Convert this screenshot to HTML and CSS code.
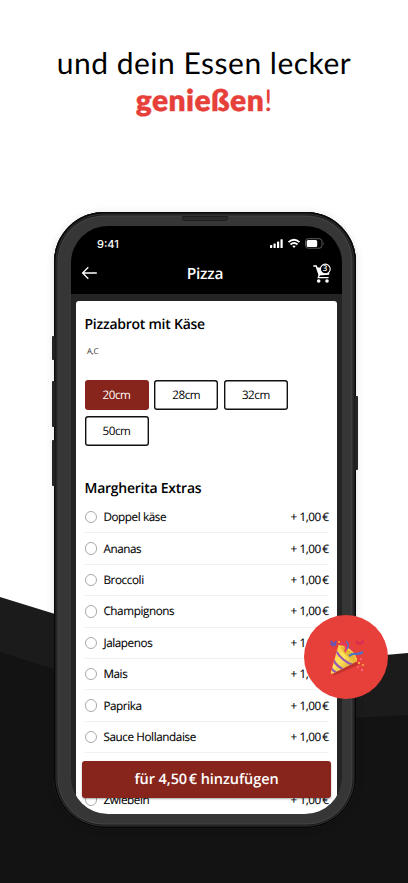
FILE: index.html
```html
<!DOCTYPE html>
<html lang="de">
<head>
<meta charset="utf-8">
<title>Pizza</title>
<link rel="stylesheet" href="styles.css">
</head>
<body>
<svg class="backdrop" viewBox="0 0 408 883" aria-hidden="true">
  <path fill="#1b1b1b" d="M0 597 L55 614 Q200 662 300 660 Q355 658 408 653 V883 H0Z"/>
  <path fill="#131313" d="M0 652 L55 669.500 Q200 721 300 720 Q355 718 408 715 V883 H0Z"/>
</svg>
<h1 class="headline"><span class="line">und dein Essen lecker</span><br><span class="accent"><b>genießen</b>!</span></h1>

<main class="phone">
  <i class="key mute"></i><i class="key up"></i><i class="key down"></i><i class="key power"></i><i class="speaker"></i>
  <div class="screen">
    <header class="top">
      <div class="status">
        <span class="time">9:41</span>
        <svg class="signals" viewBox="0 0 56 12">
          <g fill="#fff"><rect x="0" y="7" width="2.200" height="3" rx=".6"/><rect x="3.500" y="5.500" width="2.200" height="4.500" rx=".6"/><rect x="7" y="3.500" width="2.200" height="6.500" rx=".6"/><rect x="10.500" y="1.200" width="2.200" height="8.800" rx=".6"/></g>
          <g fill="none" stroke="#fff" stroke-width="1.700"><path d="M18.500 4.200Q24 -.7 29.500 4.200"/><path d="M20.500 6.500Q24 3.500 27.500 6.500"/></g>
          <path fill="#fff" d="M22.300 8.100Q24 6.800 25.700 8.100L24 10Z"/>
          <rect x="35.500" y=".7" width="16.500" height="9.500" rx="2.700" fill="none" stroke="#666" stroke-width=".9"/>
          <rect x="36.700" y="1.900" width="10.500" height="7.100" rx="1.500" fill="#fff"/><path d="M53 4q1.400 1.500 0 3z" fill="#666"/>
        </svg>
      </div>
      <div class="nav">
        <svg class="back" viewBox="0 0 16 14"><path d="M15.300 7H1.200M6.800 1.300 1.100 7l5.700 5.700" fill="none" stroke="#fff" stroke-width="1.300"/></svg>
        <span class="nav-title">Pizza</span>
        <span class="cart">
          <svg viewBox="0 0 20 21"><path d="M1.300 3H4.200L7.400 12.500" fill="none" stroke="#fff" stroke-width="1.500"/><path d="M4.600 4.500H12L17.500 10.500 16.800 11.800 7 12.600Z" fill="#fff"/><path d="M7.200 12 6.300 14.600H16.600" fill="none" stroke="#fff" stroke-width="1.300"/><circle cx="6.700" cy="18" r="1.800" fill="#fff"/><circle cx="15" cy="18" r="1.800" fill="#fff"/><circle cx="13.300" cy="6" r="4.900" fill="#000" stroke="#fff" stroke-width="1.100"/></svg>
          <b class="count">3</b>
        </span>
      </div>
    </header>
    <section class="card">
      <h2 class="product">Pizzabrot mit Käse</h2>
      <p class="allergens">A,C</p>
      <div class="sizes"><span class="size selected">20cm</span><span class="size">28cm</span><span class="size">32cm</span><span class="size">50cm</span></div>
      <h2 class="extras">Margherita Extras</h2>
      <ul class="options">
        <li><i></i><span>Doppel käse</span><em>+ 1,00<b> €</b></em></li>
        <li><i></i><span>Ananas</span><em>+ 1,00<b> €</b></em></li>
        <li><i></i><span>Broccoli</span><em>+ 1,00<b> €</b></em></li>
        <li><i></i><span>Champignons</span><em>+ 1,00<b> €</b></em></li>
        <li><i></i><span>Jalapenos</span><em>+ 1,00<b> €</b></em></li>
        <li><i></i><span>Mais</span><em>+ 1,00<b> €</b></em></li>
        <li><i></i><span>Paprika</span><em>+ 1,00<b> €</b></em></li>
        <li><i></i><span>Sauce Hollandaise</span><em>+ 1,00<b> €</b></em></li>
        <li></li>
        <li><i></i><span>Zwiebeln</span><em>+ 1,00<b> €</b></em></li>
      </ul>
    </section>
    <div class="add"><span>für 4,50<span class="euro"> €</span> hinzufügen</span></div>
  </div>
</main>

<div class="party">
  <svg viewBox="0 0 40 42">
    <defs>
      <linearGradient id="cone" x1="0" y1="0" x2="1" y2="1"><stop offset="0" stop-color="#f2b12d"/><stop offset=".4" stop-color="#ffe45c"/><stop offset=".8" stop-color="#c98a1c"/></linearGradient>
      <clipPath id="cone-clip"><path d="M10.500 6Q18 6 25 13Q29.500 18 29 22.500L5 34.500Q2.200 35.500 3 33Z"/></clipPath>
    </defs>
    <path d="M5 37 30 26 28 22 8 30Z" fill="#8f1f1b" opacity=".4"/>
    <g clip-path="url(#cone-clip)"><path d="M0 0H40V42H0Z" fill="url(#cone)"/><path d="M8 12Q14 22 25 26M5 20Q9 29 18 31M2 28Q5 32 9 34" fill="none" stroke="#9558b5" stroke-width="2.200"/></g>
    <ellipse cx="20.500" cy="14.500" rx="3" ry="10" transform="rotate(-47 20.500 14.500)" fill="#e8b637"/>
    <path d="M17 13Q19 9 17 5Q14 2 12 6" fill="none" stroke="#e43b62" stroke-width="2"/>
    <path d="M24 11 23.500 7.500" fill="none" stroke="#e43b62" stroke-width="2"/>
    <path d="M18 2Q22 5 19 10" fill="none" stroke="#5a6fc6" stroke-width="1.500"/>
    <path d="M21 17Q25 14 28 15Q32 15 35 13" fill="none" stroke="#4d70c4" stroke-width="2.200"/>
    <path d="M28 2Q30 6 33 4Q36 4 34 1" fill="none" stroke="#d92c55" stroke-width="2.200"/>
    <path d="M2.500 2 7 6 8 2M2.500 5 6 7" fill="none" stroke="#6655b4" stroke-width="1.800"/>
    <g fill="#ffc248"><circle cx="31" cy="24" r="1.100"/><circle cx="35" cy="26" r=".9"/><circle cx="11" cy="3" r=".9"/><circle cx="28" cy="20" r="1.100"/></g>
    <g fill="#ff6689"><circle cx="33" cy="20" r="1.100"/><circle cx="34" cy="31" r="1.200"/><circle cx="30" cy="28" r=".9"/></g>
  </svg>
</div>
</body>
</html>
```
FILE: styles.css
```css
* { box-sizing: border-box; }
body { margin: 0; width: 408px; height: 883px; position: relative; overflow: hidden; background: #fff; color: #000; font-family: "Open Sans", "Noto Sans", sans-serif; text-rendering: geometricPrecision; }
.backdrop { position: absolute; inset: 0; width: 408px; height: 883px; }
.headline { position: relative; margin: 0; padding-top: 45px; height: 212px; text-align: center; font: 400 30px/37px Lato, sans-serif; white-space: nowrap; }
.line { letter-spacing: .5px; }
.accent { color: #e73f39; }
.accent b { font-weight: 800; -webkit-text-stroke: .3px #e73f39; letter-spacing: .4px; }
.phone { position: relative; width: 302px; height: 616px; margin-left: 54px; padding: 14px 14px 14px 17px; border-radius: 50px; background: #363636; box-shadow: inset 0 0 0 1.500px #080808, inset 0 0 0 2.500px #303030, inset 0 0 0 3.500px #1b1b1b, inset 0 0 0 4.500px #444, 0 1px 8px rgba(0,0,0,.13); }
.key { position: absolute; width: 3px; background: #242424; border-radius: 1px; left: -2px; }
.mute { top: 124px; height: 24px; }
.up { top: 169px; height: 46px; }
.down { top: 228px; height: 46px; }
.power { top: 184px; height: 74px; left: 301px; }
.speaker { position: absolute; left: 128px; top: 4px; width: 46px; height: 5px; border-radius: 0 0 3px 3px; background: #292929; border: 1px solid #1c1c1c; }
.screen { position: relative; width: 271px; height: 588px; overflow: hidden; border-radius: 37px; background: #242424; }
.top { height: 68px; background: #000; color: #fff; }
.status { display: flex; justify-content: space-between; align-items: center; height: 35px; padding: 1px 16px 0 26px; }
.time { font: 500 11px/16px Inter, sans-serif; }
.signals { width: 56px; height: 12px; }
.nav { display: grid; grid-template-columns: 30px 1fr 30px; align-items: center; height: 24px; padding: 0 10px 0 10px; }
.back { width: 17px; height: 14px; }
.nav-title { margin: -1px 3px 0 0; text-align: center; font-size: 15.500px; line-height: 22px; letter-spacing: -.2px; font-weight: 650; }
.cart { position: relative; width: 20px; height: 21px; justify-self: end; }
.cart svg { display: block; width: 20px; height: 21px; }
.count { position: absolute; left: 10px; top: .5px; width: 6px; text-align: center; font-size: 8px; line-height: 11px; font-weight: 600; }
.card { margin: 7px 5px 0; height: 520px; padding: 13px 9px 0 8.500px; border-radius: 3px; background: #fff; }
.card h2 { margin: 0; font-size: 14px; line-height: 22px; font-weight: 600; letter-spacing: -.25px; white-space: nowrap; }
.allergens { margin: 8px 0 0 2.500px; font-size: 8px; line-height: 15px; letter-spacing: -.3px; color: #333; }
.sizes { display: flex; flex-wrap: wrap; gap: 5.700px; margin-top: 20.500px; height: 67px; }
.size { display: flex; align-items: center; justify-content: center; width: 64px; height: 30.500px; box-shadow: inset 0 0 0 1.400px #111; border-radius: 3px; font-size: 11.700px; letter-spacing: -.45px; }
.size.selected { background: #87251d; box-shadow: none; color: #fff; }
.card .extras { margin-top: 31.500px; }
.options { margin: 2px 0 0; padding: 0; list-style: none; }
.options li { display: flex; align-items: center; height: 31.400px; width: 244px; border-bottom: 1px solid #f1f1f1; font-size: 11.700px; letter-spacing: -.4px; -webkit-text-stroke: .1px #000; white-space: nowrap; }
.options i { width: 12.500px; height: 12.500px; border: 1px solid #aaa; border-radius: 50%; margin-right: 6.400px; }
.options em { margin-left: auto; font-style: normal; }
.options b { font-weight: 400; word-spacing: -1.300px; }
.add { position: absolute; left: 11px; top: 535px; width: 249px; height: 36.500px; padding-top: 1px; display: flex; align-items: center; justify-content: center; background: #87251d; color: #fff; border-radius: 3px; font-size: 14.500px; letter-spacing: -.08px; font-weight: 600; box-shadow: 0 1px 2px rgba(0,0,0,.35); }
.euro { word-spacing: -2px; }
.party { position: absolute; left: 304px; top: 615px; width: 84px; height: 84px; border-radius: 50%; background: #e73f39; }
.party svg { position: absolute; left: 24px; top: 24px; width: 40px; height: 42px; }
```
